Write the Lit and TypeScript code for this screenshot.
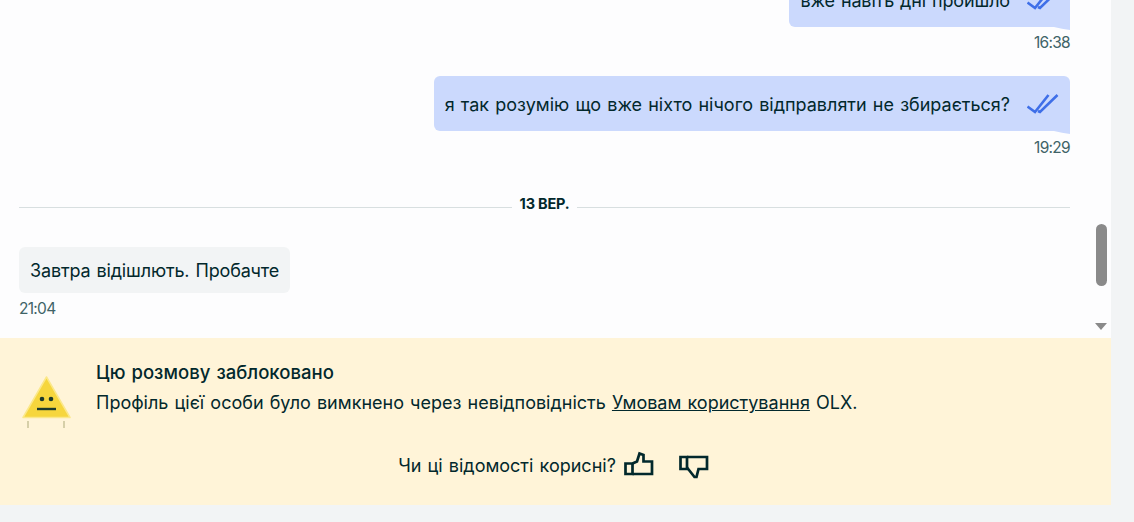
import { LitElement, html, css, svg } from "lit";
import { customElement } from "lit/decorators.js";

const ticks = svg`<svg class="ticks" width="32" height="22" viewBox="0 0 32 22" fill="none" stroke="#3f6fe8" stroke-width="2.6"><path d="M0.500 13.500 L8 19 L21.500 2"/><path d="M11 18 L13 19 L30.500 2"/></svg>`;

@customElement("app-root")
export class AppRoot extends LitElement {
  static styles = css`
    :host { display: block; width: 1134px; height: 522px; background: #f2f4f5; overflow: hidden; font-family: "Inter", sans-serif; color: #02282c; word-spacing: 1.1px; }
    .main { width: 1111px; height: 505px; display: flex; flex-direction: column; background: #fdfdfe; }
    .scroll { position: relative; height: 338px; flex: none; overflow: hidden; display: flex; flex-direction: column; justify-content: flex-end; padding: 0 41px 19px 19px; box-sizing: border-box; }
    .row { display: flex; flex-direction: column; flex: none; }
    .row.me { align-items: flex-end; }
    .row.them { align-items: flex-start; }
    .bubble { position: relative; display: flex; align-items: center; gap: 17px; border-radius: 6px; font-size: 18px; line-height: 24px; box-sizing: border-box; white-space: nowrap; }
    .me .bubble { background: #cbd9fd; padding: 17px 11px 15px 11px; border-bottom-right-radius: 0; height: 55px; }
    .me .bubble::after { content: ""; position: absolute; right: 0; top: 100%; width: 16px; height: 3px; background: #cbd9fd; clip-path: polygon(0 0, 100% 0, 100% 100%, 50% 60%); }
    .first .bubble span { letter-spacing: -0.14px; }
    .ticks { margin-top: -2px; }
    .them .bubble { background: #f2f4f5; padding: 12px 11px 10px; height: 46px; letter-spacing: -0.15px; }
    .time { font-size: 15.500px; line-height: 20px; color: #406367; margin-top: 6px; letter-spacing: -0.7px; }
    .me + .me { margin-top: 23px; }
    .me + .me .time { margin-top: 7px; }
    .day { position: relative; display: flex; justify-content: center; margin: 36px 0 23px; font-size: 14.500px; line-height: 20px; font-weight: 700; flex: none; height: 30px; word-spacing: 0; letter-spacing: -0.2px; }
    .day span { background: #fdfdfe; padding: 0 8px; height: 20px; position: relative; z-index: 1; }
    .day::before { content: ""; position: absolute; left: 0; right: 0; top: 13px; height: 1px; background: #d8dfe0; }
    .thumb { position: absolute; left: 1096px; top: 224px; width: 11px; height: 62px; border-radius: 6px; background: #8a8a8a; }
    .arrow { position: absolute; left: 1095px; top: 323px; width: 0; height: 0; border-left: 6.500px solid transparent; border-right: 6.500px solid transparent; border-top: 7px solid #8a8a8a; }
    .notice { flex: 1; background: #fff4d8; display: flex; flex-direction: column; box-sizing: border-box; padding: 22px 0 0 22px; }
    .top { display: flex; gap: 25px; }
    .face { margin-top: 16px; flex: none; }
    .title { font-size: 18.500px; line-height: 24px; font-weight: 550; letter-spacing: 0.02px; }
    .desc { font-size: 18px; line-height: 24px; margin-top: 7px; }
    .desc a { color: inherit; text-decoration: underline; }
    .feedback { display: flex; align-items: center; justify-content: center; margin-top: 22px; font-size: 18px; line-height: 24px; padding-right: 26px; }
    .feedback svg { flex: none; }
    .up { margin-left: 8px; margin-bottom: 5px; }
    .down { margin-left: 25px; margin-top: 3px; }
  `;

  render() {
    return html`
      <div class="main">
        <div class="scroll">
          <div class="row me first"><div class="bubble"><span>вже навіть дні пройшло</span>${ticks}</div><div class="time">16:38</div></div>
          <div class="row me"><div class="bubble"><span>я так розумію що вже ніхто нічого відправляти не збирається?</span>${ticks}</div><div class="time">19:29</div></div>
          <div class="day"><span>13 ВЕР.</span></div>
          <div class="row them"><div class="bubble">Завтра відішлють. Пробачте</div><div class="time">21:04</div></div>
        </div>
        <div class="notice">
          <div class="top">
            <svg class="face" width="49" height="53" viewBox="0 0 49 53" fill="none">
              <path d="M24.500 1 L48 41.500 H1 Z" fill="#f6d63d" stroke="#fbe88a" stroke-width="1.500" stroke-linejoin="round"/>
              <circle cx="20" cy="23" r="2.300" fill="#1c3a2c"/><circle cx="29" cy="23" r="2.300" fill="#1c3a2c"/>
              <path d="M15 33 H34" stroke="#1c3a2c" stroke-width="2.400"/>
              <path d="M6 45 V52 M42 45 V52" stroke="#d6cfa8" stroke-width="2"/>
            </svg>
            <div>
              <div class="title">Цю розмову заблоковано</div>
              <div class="desc">Профіль цієї особи було вимкнено через невідповідність <a href="#">Умовам користування</a> OLX.</div>
            </div>
          </div>
          <div class="feedback">
            <span>Чи ці відомості корисні?</span>
            <svg class="up" width="30" height="25" viewBox="0 0 30 25" fill="none" stroke="#02282c" stroke-width="2.700"><path d="M1.500 12.500 H8.500 V23 H1.500 Z"/><path d="M8.500 12.500 L13 10.500 L15.500 2.500 L19.500 4 V10.500 H28 V23 H8.500"/></svg>
            <svg class="down" width="30" height="25" viewBox="0 0 30 25" fill="none" stroke="#02282c" stroke-width="2.700"><path d="M1.500 2 H8 V14 H1.500 Z"/><path d="M8 2 H28 V14 H19.500 L17.500 22 L15.500 22 L8 12.500"/></svg>
          </div>
        </div>
      </div>
      <div class="thumb"></div>
      <div class="arrow"></div>
    `;
  }
}
